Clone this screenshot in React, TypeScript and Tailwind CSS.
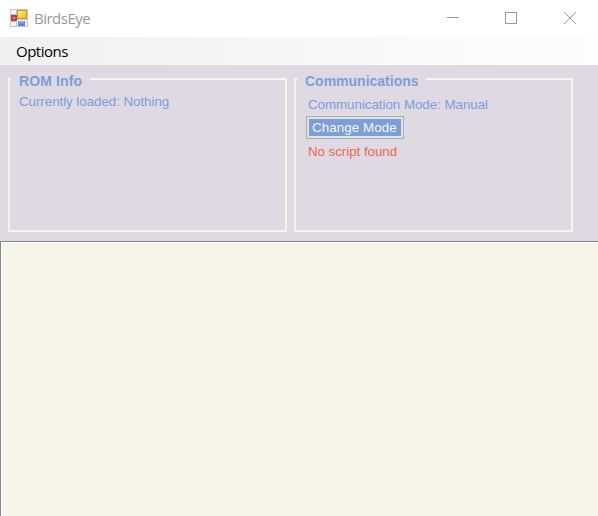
import type { ReactNode } from "react";

function AppIcon() {
  return (
    <svg className="-mt-px" width="18" height="18" viewBox="0 0 18 18" shapeRendering="crispEdges">
      <defs>
        <linearGradient id="yellow" x1="0" y1="0" x2="1" y2="1">
          <stop offset="0" stopColor="#ffea8c" />
          <stop offset="1" stopColor="#f5b90c" />
        </linearGradient>
        <linearGradient id="blue" x1="0" y1="0" x2="0" y2="1">
          <stop offset="0" stopColor="#8fb8fa" />
          <stop offset="1" stopColor="#4a82ea" />
        </linearGradient>
      </defs>
      <rect width="18" height="18" fill="#c4c4c4" />
      <rect x="1" y="1" width="5" height="4" fill="#f8f8f8" />
      <rect x="1" y="13" width="5" height="4" fill="#f8f8f8" />
      <rect x="7" y="11" width="10" height="6" fill="#f4f4f4" />
      <rect x="1" y="6" width="6" height="6" fill="#b3403a" />
      <rect x="2" y="7" width="4" height="4" fill="#cf3d35" />
      <rect x="3" y="8" width="2" height="2" fill="#e88a80" />
      <rect x="7" y="1" width="10" height="9" fill="#c99a2c" />
      <rect x="8" y="2" width="8" height="7" fill="url(#yellow)" />
      <rect x="8" y="12" width="7" height="5" fill="#5b87d6" />
      <rect x="9" y="12" width="5" height="4" fill="url(#blue)" />
    </svg>
  );
}

function GroupBox({ title, titleClass, children }: { title: string; titleClass: string; children: ReactNode }) {
  return (
    <section className="relative h-[154px] w-[279px] border-2 border-[#f7f4e9]">
      <h2 className={`absolute -top-[8px] left-[1px] h-[18px] bg-[#dfd9e3] pl-2 text-[14px] leading-[19px] font-bold whitespace-nowrap ${titleClass}`}>
        {title}
      </h2>
      {children}
    </section>
  );
}

export default function App() {
  return (
    <div className="flex h-[516px] w-[598px] flex-col overflow-hidden bg-[#dfd9e3] font-['Liberation_Sans',Arial,sans-serif] text-[13.33px] text-[#7ba0d8]">
      <header className="flex h-[37px] shrink-0 items-center bg-white pl-[10px] text-[#999999]">
        <AppIcon />
        <span className="ml-[6px] font-['Open_Sans',sans-serif] text-[15px] tracking-[-0.5px]">BirdsEye</span>
        <svg className="ml-auto" width="151" height="37" viewBox="447 0 151 37" fill="none" stroke="#999999">
          <path d="M447 17.5h12M505.5 12.5h11v11h-11z" shapeRendering="crispEdges" />
          <path d="M564 12l12 12M576 12l-12 12" />
        </svg>
      </header>
      <nav className="flex h-7 shrink-0 items-center bg-linear-to-r from-[#f0f0f0] to-[#fdfdfd] pt-px pl-4 font-['Open_Sans',sans-serif] text-[15px] tracking-[-0.5px] text-black">
        Options
      </nav>
      <main className="flex h-44 shrink-0 gap-[7px] pt-[13px] pl-2">
        <GroupBox title="ROM Info" titleClass="w-[79px] tracking-[0.12px]">
          <p className="pt-[13px] pl-[9px] leading-[18px] tracking-[-0.04px]">Currently loaded: Nothing</p>
        </GroupBox>
        <GroupBox title="Communications" titleClass="w-[129px]">
          <div className="flex flex-col items-start pt-4 pl-[10px]">
            <p className="pl-[2px] leading-[18px] tracking-[-0.03px]">Communication Mode: Manual</p>
            <button className="mt-[2px] h-[23px] w-[98px] border border-[#adadad] bg-[#e1e1e1] p-[2px]">
              <span className="block h-[17px] bg-[#7ba0d8] pl-[3px] text-left leading-[17px] tracking-[0.1px] text-[#f7f4e9]">Change Mode</span>
            </button>
            <p className="mt-1 pl-[2px] leading-[18px] tracking-[-0.04px] text-[#ec6a50]">No script found</p>
          </div>
        </GroupBox>
      </main>
      <div className="grow border-t border-l border-[#828790] bg-[#f7f4e9]">
        <div className="h-full border-t border-l border-white" />
      </div>
    </div>
  );
}
